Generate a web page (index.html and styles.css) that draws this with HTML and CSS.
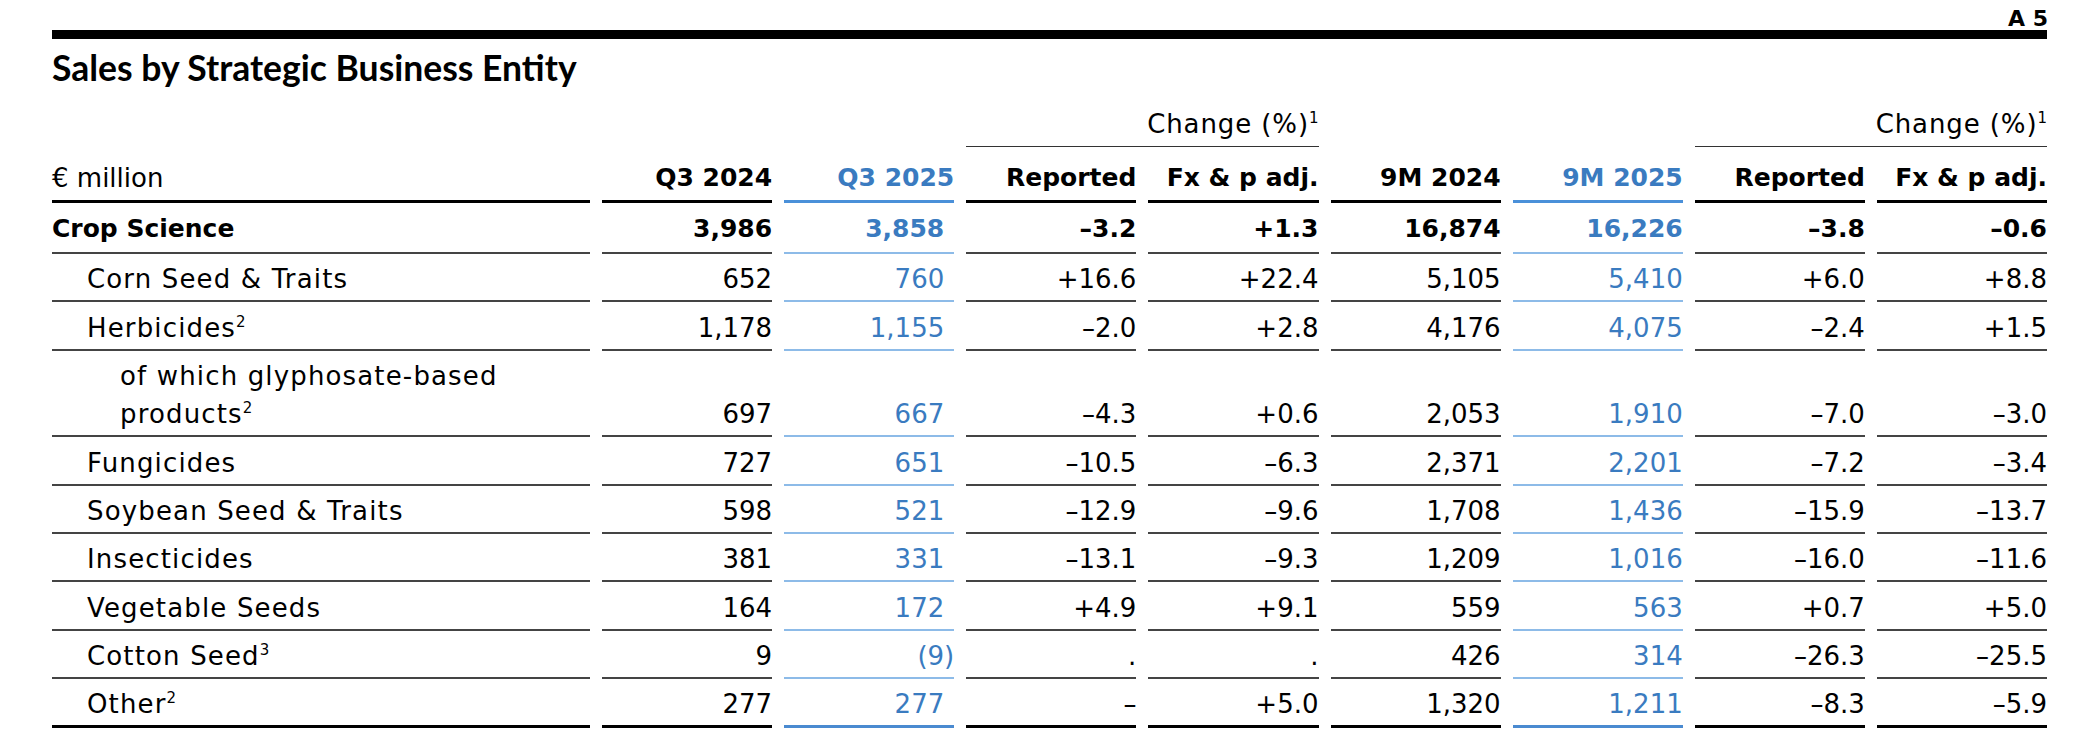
FILE: index.html
```html
<!DOCTYPE html>
<html lang="en">
<head>
<meta charset="utf-8">
<title>Sales by Strategic Business Entity</title>
<link rel="stylesheet" href="styles.css">
</head>
<body>
<div class="page">
  <div class="tag">A 5</div>
  <div class="rule"></div>
  <h1 class="title">Sales by Strategic Business Entity</h1>
  <div class="table">
    <div class="row group">
      <div class="span s1">Change (%)<sup>1</sup></div>
      <div class="span s2">Change (%)<sup>1</sup></div>
    </div>
    <div class="row head">
      <div class="c lbl">€ million</div>
      <div class="c b">Q3 2024</div>
      <div class="c b blue">Q3 2025</div>
      <div class="c b">Reported</div>
      <div class="c b">Fx &amp; p adj.</div>
      <div class="c b">9M 2024</div>
      <div class="c b blue">9M 2025</div>
      <div class="c b">Reported</div>
      <div class="c b">Fx &amp; p adj.</div>
    </div>
    <div class="row total">
      <div class="c lbl">Crop Science</div>
      <div class="c">3,986</div>
      <div class="c blue q">3,858</div>
      <div class="c">–3.2</div>
      <div class="c">+1.3</div>
      <div class="c">16,874</div>
      <div class="c blue">16,226</div>
      <div class="c">–3.8</div>
      <div class="c">–0.6</div>
    </div>
    <div class="row">
      <div class="c lbl i1">Corn Seed &amp; Traits</div>
      <div class="c">652</div>
      <div class="c blue q">760</div>
      <div class="c">+16.6</div>
      <div class="c">+22.4</div>
      <div class="c">5,105</div>
      <div class="c blue">5,410</div>
      <div class="c">+6.0</div>
      <div class="c">+8.8</div>
    </div>
    <div class="row">
      <div class="c lbl i1">Herbicides<sup>2</sup></div>
      <div class="c">1,178</div>
      <div class="c blue q">1,155</div>
      <div class="c">–2.0</div>
      <div class="c">+2.8</div>
      <div class="c">4,176</div>
      <div class="c blue">4,075</div>
      <div class="c">–2.4</div>
      <div class="c">+1.5</div>
    </div>
    <div class="row">
      <div class="c lbl i2">of which glyphosate-based<br>products<sup>2</sup></div>
      <div class="c">697</div>
      <div class="c blue q">667</div>
      <div class="c">–4.3</div>
      <div class="c">+0.6</div>
      <div class="c">2,053</div>
      <div class="c blue">1,910</div>
      <div class="c">–7.0</div>
      <div class="c">–3.0</div>
    </div>
    <div class="row">
      <div class="c lbl i1">Fungicides</div>
      <div class="c">727</div>
      <div class="c blue q">651</div>
      <div class="c">–10.5</div>
      <div class="c">–6.3</div>
      <div class="c">2,371</div>
      <div class="c blue">2,201</div>
      <div class="c">–7.2</div>
      <div class="c">–3.4</div>
    </div>
    <div class="row">
      <div class="c lbl i1">Soybean Seed &amp; Traits</div>
      <div class="c">598</div>
      <div class="c blue q">521</div>
      <div class="c">–12.9</div>
      <div class="c">–9.6</div>
      <div class="c">1,708</div>
      <div class="c blue">1,436</div>
      <div class="c">–15.9</div>
      <div class="c">–13.7</div>
    </div>
    <div class="row">
      <div class="c lbl i1">Insecticides</div>
      <div class="c">381</div>
      <div class="c blue q">331</div>
      <div class="c">–13.1</div>
      <div class="c">–9.3</div>
      <div class="c">1,209</div>
      <div class="c blue">1,016</div>
      <div class="c">–16.0</div>
      <div class="c">–11.6</div>
    </div>
    <div class="row">
      <div class="c lbl i1">Vegetable Seeds</div>
      <div class="c">164</div>
      <div class="c blue q">172</div>
      <div class="c">+4.9</div>
      <div class="c">+9.1</div>
      <div class="c">559</div>
      <div class="c blue">563</div>
      <div class="c">+0.7</div>
      <div class="c">+5.0</div>
    </div>
    <div class="row">
      <div class="c lbl i1">Cotton Seed<sup>3</sup></div>
      <div class="c">9</div>
      <div class="c blue">(9)</div>
      <div class="c">.</div>
      <div class="c">.</div>
      <div class="c">426</div>
      <div class="c blue">314</div>
      <div class="c">–26.3</div>
      <div class="c">–25.5</div>
    </div>
    <div class="row last">
      <div class="c lbl i1">Other<sup>2</sup></div>
      <div class="c">277</div>
      <div class="c blue q">277</div>
      <div class="c">–</div>
      <div class="c">+5.0</div>
      <div class="c">1,320</div>
      <div class="c blue">1,211</div>
      <div class="c">–8.3</div>
      <div class="c">–5.9</div>
    </div>
  </div>
</div>
</body>
</html>
```

FILE: styles.css
```css
html, body {
  margin: 0;
  padding: 0;
  background: #fff;
}

body {
  font-family: "DejaVu Sans", Verdana, sans-serif;
  color: #000;
}

.page {
  padding: 7.5px 45px 0 52px;
}

.tag {
  text-align: right;
  font-weight: 700;
  font-size: 22px;
  line-height: 22.5px;
  margin-right: -1px;
}

.rule {
  height: 9px;
  background: #000;
}

.title {
  margin: 9.5px 0 0;
  font-family: Lato, "DejaVu Sans", sans-serif;
  font-size: 35.5px;
  line-height: 38px;
  font-weight: 700;
}

.table {
  margin-top: 18.5px;
  font-size: 26px;
  line-height: 38px;
}

.row {
  display: grid;
  grid-template-columns: 538px repeat(8, minmax(0, 1fr));
  column-gap: 12px;
  align-items: end;
}

.c {
  text-align: right;
  white-space: nowrap;
  padding: 6.4px 0 2px;
  border-bottom: 2px solid #444;
}

.c.blue {
  color: #3a7bc0;
  border-bottom-color: #8dbbe8;
}

.c.q {
  padding-right: 10px;
}

.c.lbl {
  text-align: left;
  letter-spacing: 1.15px;
}

.i1 {
  padding-left: 35px;
}

.i2 {
  padding-left: 68px;
}

.b {
  font-weight: 700;
  font-size: 25px;
}

sup {
  font-size: 15px;
  line-height: 0;
  vertical-align: 10px;
  letter-spacing: 0;
}

.group .span {
  text-align: right;
  letter-spacing: 0.9px;
  padding: 0 0 3px;
  border-bottom: 1px solid #333;
}

.group .s1 {
  grid-column: 4 / 6;
}

.group .s2 {
  grid-column: 8 / 10;
}

.head .c {
  padding: 12.3px 0 2.7px;
  border-bottom: 3px solid #000;
}

.head .c.lbl {
  font-size: 26px;
  letter-spacing: 0;
}

.head .c.blue {
  border-bottom-color: #4a90d9;
}

.total .c {
  font-weight: 700;
  font-size: 25px;
  padding: 7.3px 0 3.7px;
}

.total .c.lbl {
  letter-spacing: 0;
}

.total .c.q {
  padding-right: 10px;
}

.last .c {
  border-bottom: 3px solid #000;
}

.last .c.blue {
  border-bottom-color: #4a8ad0;
}
```
